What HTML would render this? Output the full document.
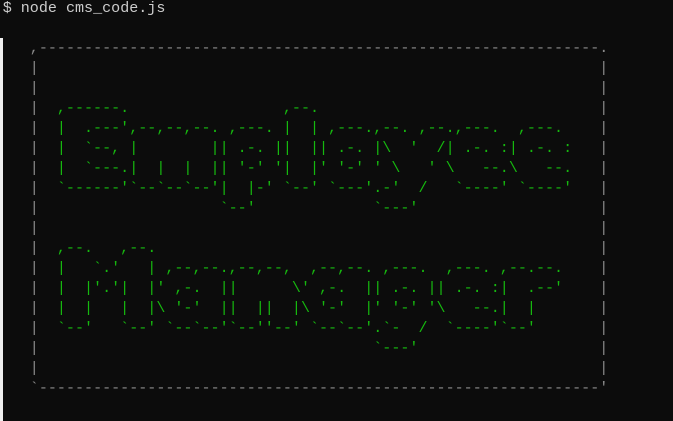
<!DOCTYPE html>
<html><head><meta charset="utf-8"><style>
html,body{margin:0;padding:0;background:#0c0c0c;width:673px;height:421px;overflow:hidden;position:relative}
pre{position:absolute;margin:0;font-family:"Liberation Mono",monospace;font-size:15.07px;line-height:20px;white-space:pre}
.g{color:#8a8a8a}
.a{color:#16b80f}
.c{color:#cccccc}
.strip{position:absolute;left:0;top:38px;width:3px;height:383px;background:#f0f0f0}
</style></head><body>
<div class="strip"></div>
<pre class="c" style="left:2.7px;top:-2px">$ node cms_code.js</pre>
<pre class="g" style="left:29.8px;top:38px">,--------------------------------------------------------------.</pre>
<pre class="g" style="left:29.8px;top:58px">|
|
|
|
|
|
|
|
|
|
|
|
|
|
|
|</pre>
<pre class="g" style="left:599.3px;top:58px">|
|
|
|
|
|
|
|
|
|
|
|
|
|
|
|</pre>
<pre class="g" style="left:29.8px;top:378px">`--------------------------------------------------------------'</pre>
<pre class="a" style="left:56.9px;top:98px">,------.                 ,--.
|  .---',--,--,--. ,---. |  | ,---.,--. ,--.,---.  ,---.
|  `--, |        || .-. ||  || .-. |\  '  /| .-. :| .-. :
|  `---.|  |  |  || '-' '|  |' '-' ' \   ' \   --.\   --.
`------'`--`--`--'|  |-' `--' `---'.-'  /   `----' `----'
                  `--'             `---'</pre>
<pre class="a" style="left:56.9px;top:238px">,--.   ,--.
|   `.'   | ,--,--.,--,--,  ,--,--. ,---.  ,---. ,--.--.
|  |'.'|  |' ,-.  ||      \' ,-.  || .-. || .-. :|  .--'
|  |   |  |\ '-'  ||  ||  |\ '-'  |' '-' '\   --.|  |
`--'   `--' `--`--'`--''--' `--`--'.`-  /  `----'`--'
                                   `---'</pre>
</body></html>
